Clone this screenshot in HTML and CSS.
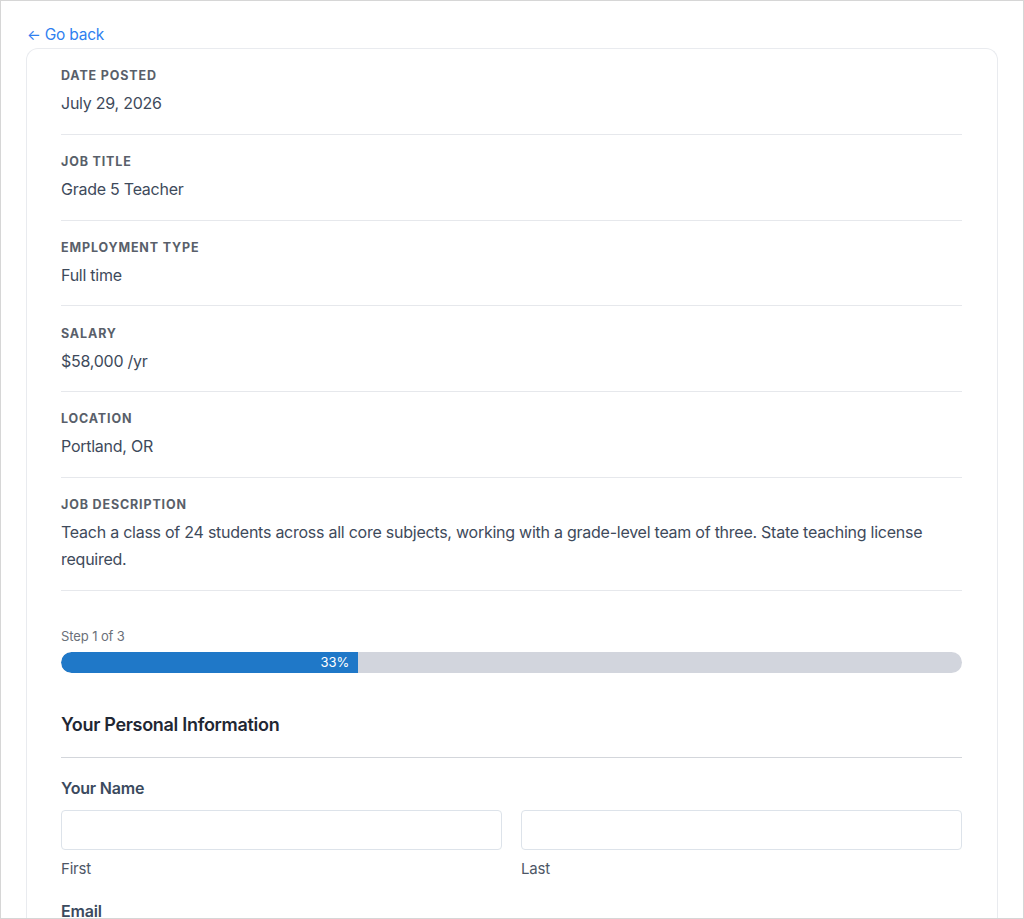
FILE: index.html
```html
<!DOCTYPE html>
<html lang="en">
<head>
<meta charset="utf-8">
<title>Grade 5 Teacher</title>
<link rel="stylesheet" href="styles.css">
</head>
<body>
<div class="frame">
  <a class="back" href="#"><span class="arrow">←</span> Go back</a>
  <div class="card">
    <dl class="details">
      <div class="item">
        <dt>Date Posted</dt>
        <dd>July 29, 2026</dd>
      </div>
      <div class="item">
        <dt>Job Title</dt>
        <dd>Grade 5 Teacher</dd>
      </div>
      <div class="item">
        <dt>Employment Type</dt>
        <dd>Full time</dd>
      </div>
      <div class="item">
        <dt>Salary</dt>
        <dd>$58,000 /yr</dd>
      </div>
      <div class="item">
        <dt>Location</dt>
        <dd>Portland, OR</dd>
      </div>
      <div class="item">
        <dt>Job Description</dt>
        <dd>Teach a class of 24 students across all core subjects, working with a grade-level team of three. State teaching license required.</dd>
      </div>
    </dl>

    <form class="form">
      <div class="step">Step 1 of 3</div>
      <div class="progress">
        <div class="progress-fill" style="width:33%">33%</div>
      </div>

      <h2 class="section-title">Your Personal Information</h2>

      <div class="field">
        <div class="field-label">Your Name</div>
        <div class="name-row">
          <label class="sub">
            <input type="text" class="input">
            <span class="sub-label">First</span>
          </label>
          <label class="sub">
            <input type="text" class="input">
            <span class="sub-label">Last</span>
          </label>
        </div>
      </div>

      <div class="field field-email">
        <div class="field-label">Email</div>
        <input type="email" class="input">
      </div>
    </form>
  </div>
</div>
</body>
</html>
```

FILE: styles.css
```css
html, body {
  margin: 0;
  padding: 0;
  background: #ffffff;
}

body {
  font-family: Inter, "Open Sans", "Liberation Sans", sans-serif;
  color: #3e4a5b;
}

.frame {
  box-sizing: border-box;
  height: 919px;
  overflow: hidden;
  border: 1px solid #d6d6d6;
  padding: 24px 25px 0 25px;
}

.back {
  display: flex;
  width: fit-content;
  align-items: center;
  gap: 4px;
  height: 20px;
  font-size: 15.5px;
  line-height: 20px;
  letter-spacing: -0.2px;
  color: #2f7ff0;
  text-decoration: none;
  margin-left: 1px;
}

.arrow {
  font-size: 14.5px;
}

.card {
  margin-top: 3px;
  border: 1px solid #e9ebef;
  border-bottom: none;
  border-radius: 12px 12px 0 0;
  padding: 0 35px 40px 34px;
}

.details {
  margin: 0;
}

.item {
  padding: 18.25px 0 16.5px;
  border-bottom: 1px solid #e6e8ec;
}

.item dt {
  font-size: 12.5px;
  line-height: 18px;
  font-weight: 700;
  letter-spacing: 0.85px;
  text-transform: uppercase;
  color: #595f6a;
}

.item dd {
  margin: 5px 0 0;
  font-size: 16px;
  line-height: 27px;
  letter-spacing: -0.25px;
  color: #3e4a5b;
}

.form {
  padding-top: 36px;
}

.step {
  font-size: 13px;
  line-height: 18px;
  letter-spacing: -0.1px;
  color: #6b7079;
}

.progress {
  margin-top: 7px;
  height: 21px;
  border-radius: 11px;
  background: #d2d5dd;
  overflow: hidden;
  display: flex;
}

.progress-fill {
  box-sizing: border-box;
  background: #1f78c8;
  color: #ffffff;
  font-size: 13px;
  line-height: 21px;
  text-align: right;
  padding-right: 9px;
  border-radius: 11px 0 0 11px;
}

.section-title {
  margin: 40px 0 0;
  padding-bottom: 20px;
  border-bottom: 1px solid #d3d6db;
  font-size: 18px;
  line-height: 24px;
  font-weight: 600;
  letter-spacing: -0.3px;
  color: #1f2733;
}

.field {
  margin-top: 18px;
}

.field-label {
  font-size: 16px;
  line-height: 24px;
  font-weight: 600;
  letter-spacing: -0.2px;
  color: #3b4a5e;
}

.name-row {
  margin-top: 10px;
  display: grid;
  grid-template-columns: 1fr 1fr;
  column-gap: 19px;
}

.sub {
  display: flex;
  flex-direction: column;
}

.input {
  box-sizing: border-box;
  width: 100%;
  height: 40px;
  border: 1px solid #dde3ea;
  border-radius: 4px;
  background: #ffffff;
  font: inherit;
  margin: 0;
  display: block;
}

.sub-label {
  margin-top: 8px;
  font-size: 15px;
  line-height: 22px;
  letter-spacing: -0.2px;
  color: #4d5766;
}

.field-email {
  margin-top: 19px;
}

.field-email .input {
  margin-top: 10px;
}
```
